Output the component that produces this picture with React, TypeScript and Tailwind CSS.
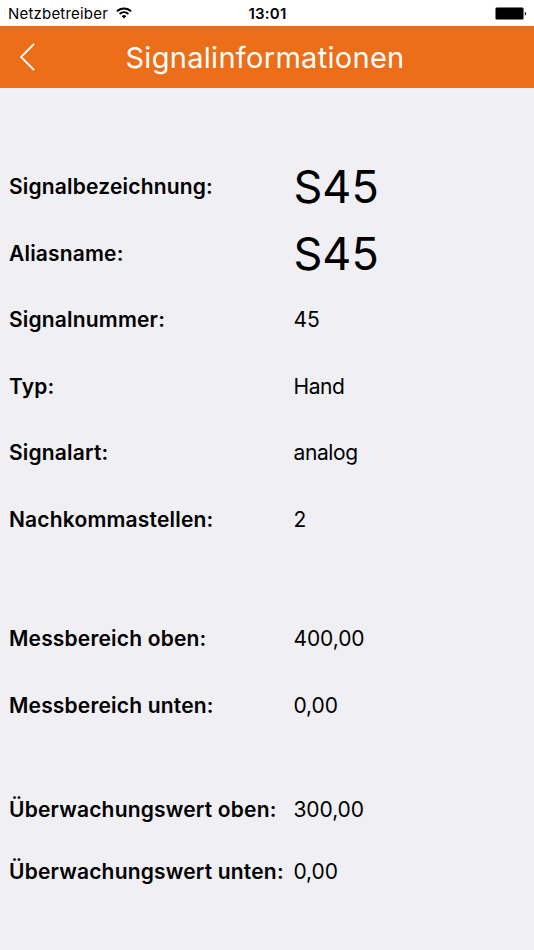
type Row = {
  label: string;
  value: string;
  height: string;
  valueClass?: string;
};

const rows: Row[] = [
  { label: "Signalbezeichnung:", value: "S45", height: "h-[67px]", valueClass: "text-[45px]" },
  { label: "Aliasname:", value: "S45", height: "h-[66px]", valueClass: "text-[45px]" },
  { label: "Signalnummer:", value: "45", height: "h-[67px]" },
  { label: "Typ:", value: "Hand", height: "h-[66px]", valueClass: "text-[21px] tracking-[-0.4px]" },
  { label: "Signalart:", value: "analog", height: "h-[67px]", valueClass: "text-[21px] tracking-[-0.4px]" },
  { label: "Nachkommastellen:", value: "2", height: "h-[66px]" },
];

const rangeRows: Row[] = [
  { label: "Messbereich oben:", value: "400,00", height: "h-[67px]" },
  { label: "Messbereich unten:", value: "0,00", height: "h-[66px]" },
];

const limitRows: Row[] = [
  { label: "Überwachungswert oben:", value: "300,00", height: "h-[63px]" },
  { label: "Überwachungswert unten:", value: "0,00", height: "h-[61px]" },
];

const StatusBar = () => {
  return (
    <div className="grid h-[26px] grid-cols-3 items-center bg-white pr-[7px] pl-2">
      <div className="flex items-center gap-2 whitespace-nowrap">
        <span className="text-[15px] leading-none tracking-[0.2px]">Netzbetreiber</span>
        <svg width="16" height="12" viewBox="0 0 16 12" fill="none" stroke="black" strokeWidth="1.9">
          <path d="M0.9 4.4a10 10 0 0 1 14.2 0" />
          <path d="M3.6 7a6.2 6.2 0 0 1 8.8 0" />
          <path d="M8 11.6 5.7 9.2a3.3 3.3 0 0 1 4.6 0z" fill="black" stroke="none" />
        </svg>
      </div>
      <span className="text-center text-[15px] leading-none font-semibold tracking-[0.2px]">13:01</span>
      <div className="flex justify-end">
        <svg width="32" height="13" viewBox="0 0 32 13">
          <rect x="0.5" y="0.5" width="28" height="12" rx="1.5" fill="black" stroke="#777" strokeWidth="0.6" />
          <path d="M29.8 4.8v3.8a2 2 0 0 0 0-3.8z" fill="black" />
        </svg>
      </div>
    </div>
  );
};

const InfoRow = ({ label, value, height, valueClass = "text-[21px] tracking-[-0.1px]" }: Row) => {
  return (
    <div className={`flex items-center pl-[9px] whitespace-nowrap ${height}`}>
      <p className="w-[284.5px] shrink-0 text-[21px] leading-none font-semibold tracking-[0.18px]">
        {label}
      </p>
      <p className={`leading-none! ${valueClass}`}>{value}</p>
    </div>
  );
};

const App = () => {
  return (
    <div className="h-[950px] w-[534px] overflow-hidden bg-[#efeff4] font-['Inter',sans-serif] text-black">
      <StatusBar />
      <header className="grid h-[62px] grid-cols-[62px_1fr_66px] items-center bg-[#ec6e19] text-white">
        <svg className="ml-5" width="15" height="28" viewBox="0 0 15 28" fill="none" stroke="white" strokeWidth="1.8">
          <path d="M14 1 1 14l13 13" />
        </svg>
        <h1 className="text-center text-[29px] leading-none tracking-[0.3px]">Signalinformationen</h1>
      </header>
      <main>
        <section className="pt-[65px]">
          {rows.map((row) => (
            <InfoRow key={row.label} {...row} />
          ))}
        </section>
        <section className="pt-[53px]">
          {rangeRows.map((row) => (
            <InfoRow key={row.label} {...row} />
          ))}
        </section>
        <section className="pt-10">
          {limitRows.map((row) => (
            <InfoRow key={row.label} {...row} />
          ))}
        </section>
      </main>
    </div>
  );
};

export default App;
